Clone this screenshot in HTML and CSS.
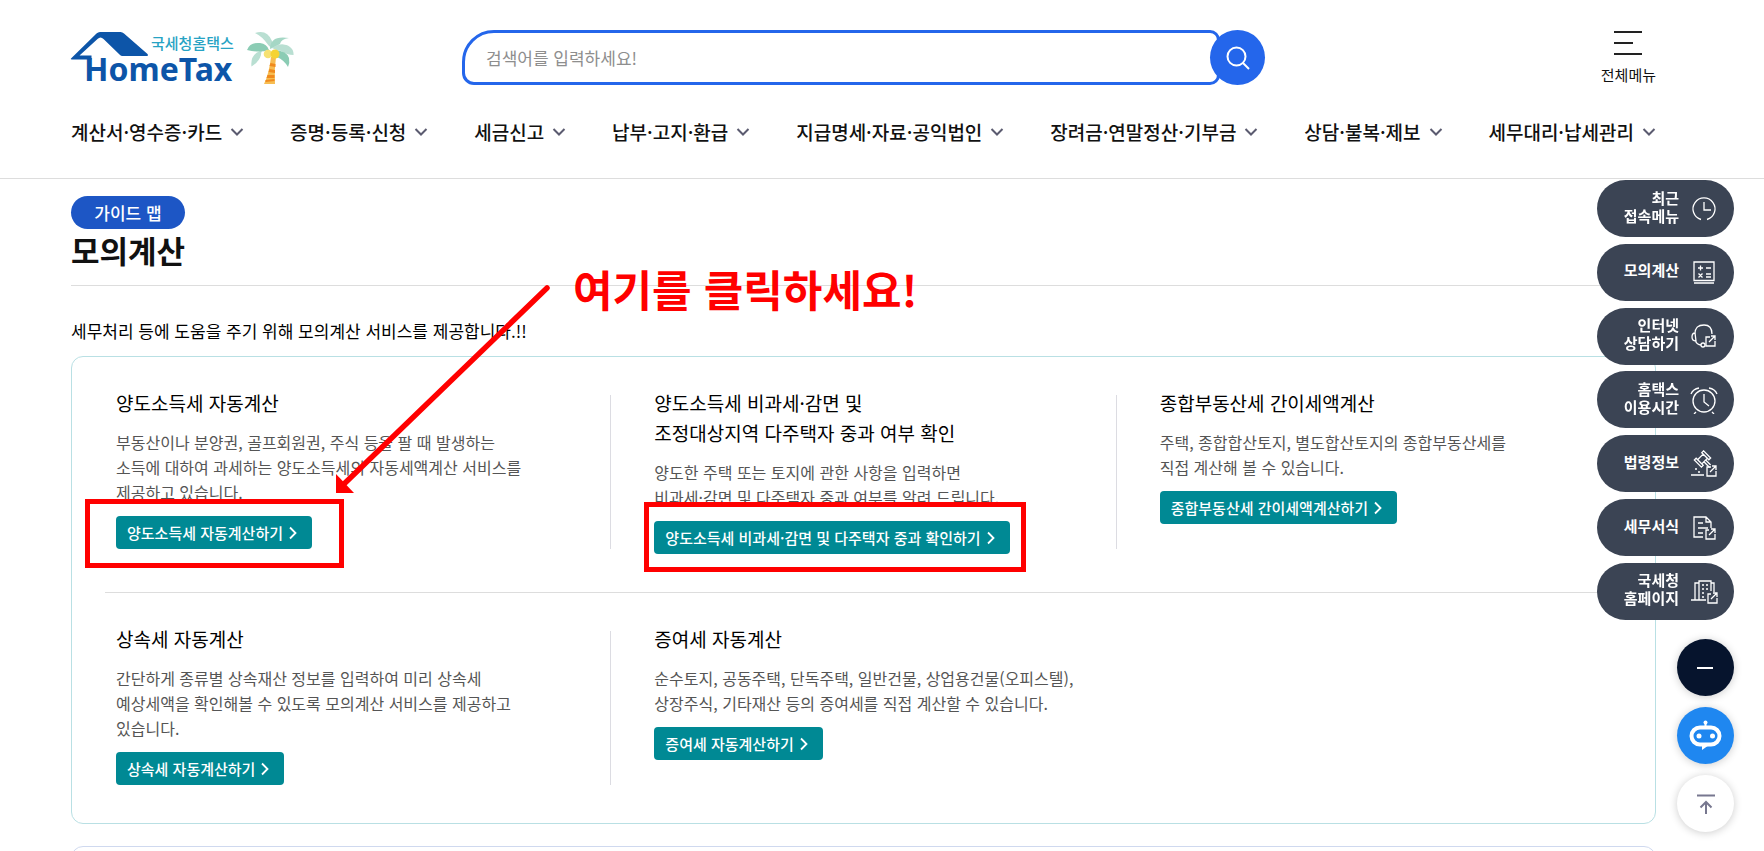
FILE: index.html
```html
<!DOCTYPE html>
<html lang="ko">
<head>
<meta charset="utf-8">
<title>국세청 홈택스 - 모의계산</title>
<meta name="viewport" content="width=device-width, initial-scale=1">
<link rel="stylesheet" href="styles.css">
</head>
<body>
<svg class="defs" aria-hidden="true">
  <symbol id="chev-down" viewBox="0 0 14 10"><path d="M1.500 2l5.500 5.500 5.500-5.500" fill="none" stroke="#5b5b70" stroke-width="2"/></symbol>
  <symbol id="chev-right" viewBox="0 0 8 14"><path d="M1 1.500l5.500 5.500-5.500 5.500" fill="none" stroke="#fff" stroke-width="1.800"/></symbol>
</svg>

<header class="header">
  <div class="top">
    <a class="brand" href="#" aria-label="국세청 홈택스">
      <svg class="logo" viewBox="0 0 168 52">
        <path d="M0 26.500 25.500 1.500Q27 0 29 0H49.500Q51.500 0 53 1.500L76.500 22Q78 24 75 24H51.500Q50 24 48.500 22.500L32.500 7Q29.500 4 26.500 7L8.500 23.500H20.500V27.500H2Q-1 27.500 0 26.500Z" fill="#0d55a8"/>
        <text class="logo-sub" x="80" y="17">국세청홈택스</text>
        <text class="logo-main" x="13" y="49">HomeTax</text>
      </svg>
      <svg class="palm" viewBox="0 0 47 52">
        <path d="M24 25h5q-2 13-1 27H17q5-10 7-27z" fill="#f7bd52"/>
        <path d="M23.500 31l5 1v3l-6-1zM22.500 37l5.500 1v3l-6.500-1zM20.500 43h7v3h-8zM18.500 48l9-1v2l-9 1z" fill="#f08a1d"/>
        <path d="M22 19Q14 15 14 23 12 30 4.500 34.500 3 23 13 19 18 16 22 19z" fill="#b9dfd2"/>
        <path d="M22 18Q13 21 0 18 3 10 13 11 20 12 22 18z" fill="#8bccb4"/>
        <path d="M22 14Q15 4 8 1 20-3 25 9L25 16z" fill="#b9dfd2"/>
        <path d="M23 17Q23 3 42 6 34 7 33 12 28 15 23 17z" fill="#a5d7c5"/>
        <path d="M25 16Q35 9 43 15 47 18 46.500 23 40 23 34 19 28 18 25 16z" fill="#b9dfd2"/>
        <path d="M28 18Q40 19 42 26 43 31 41 35 37 28 30 25z" fill="#8bccb4"/>
        <circle cx="21" cy="22" r="4.300" fill="#f6e173"/><circle cx="28" cy="22" r="4.500" fill="#f5d333"/>
      </svg>
    </a>
    <form class="search">
      <input class="search-input" type="text" aria-label="검색어" placeholder="검색어를 입력하세요!">
      <button class="search-btn" type="button" aria-label="검색">
        <svg viewBox="0 0 24 24" width="24" height="24" fill="none" stroke="#fff" stroke-width="2"><circle cx="10.500" cy="10.500" r="9"/><path d="M17 17l6 6"/></svg>
      </button>
    </form>
    <button class="all-menu" type="button">
      <svg viewBox="0 0 28 26" width="28" height="26" stroke="#222" stroke-width="2"><path d="M0 2h28M0 13h19M0 24h28"/></svg>
      <span>전체메뉴</span>
    </button>
  </div>
  <nav class="nav">
    <a href="#">계산서·영수증·카드<svg class="chev"><use href="#chev-down"/></svg></a>
    <a href="#">증명·등록·신청<svg class="chev"><use href="#chev-down"/></svg></a>
    <a href="#">세금신고<svg class="chev"><use href="#chev-down"/></svg></a>
    <a href="#">납부·고지·환급<svg class="chev"><use href="#chev-down"/></svg></a>
    <a href="#">지급명세·자료·공익법인<svg class="chev"><use href="#chev-down"/></svg></a>
    <a href="#">장려금·연말정산·기부금<svg class="chev"><use href="#chev-down"/></svg></a>
    <a href="#">상담·불복·제보<svg class="chev"><use href="#chev-down"/></svg></a>
    <a href="#">세무대리·납세관리<svg class="chev"><use href="#chev-down"/></svg></a>
  </nav>
</header>

<main class="main">
  <div class="title-block">
    <a class="badge" href="#">가이드 맵</a>
    <h1>모의계산</h1>
  </div>
  <p class="intro">세무처리 등에 도움을 주기 위해 모의계산 서비스를 제공합니다.!!</p>
  <section class="box">
    <div class="row">
      <article class="item">
        <h2>양도소득세 자동계산</h2>
        <p>부동산이나 분양권, 골프회원권, 주식 등을 팔 때 발생하는<br>소득에 대하여 과세하는 양도소득세의 자동세액계산 서비스를<br>제공하고 있습니다.</p>
        <a class="go" href="#">양도소득세 자동계산하기<svg class="arrow"><use href="#chev-right"/></svg></a>
      </article>
      <article class="item">
        <h2>양도소득세 비과세·감면 및<br>조정대상지역 다주택자 중과 여부 확인</h2>
        <p>양도한 주택 또는 토지에 관한 사항을 입력하면<br>비과세·감면 및 다주택자 중과 여부를 알려 드립니다.</p>
        <a class="go" href="#">양도소득세 비과세·감면 및 다주택자 중과 확인하기<svg class="arrow"><use href="#chev-right"/></svg></a>
      </article>
      <article class="item">
        <h2>종합부동산세 간이세액계산</h2>
        <p>주택, 종합합산토지, 별도합산토지의 종합부동산세를<br>직접 계산해 볼 수 있습니다.</p>
        <a class="go" href="#">종합부동산세 간이세액계산하기<svg class="arrow"><use href="#chev-right"/></svg></a>
      </article>
    </div>
    <div class="row">
      <article class="item">
        <h2>상속세 자동계산</h2>
        <p>간단하게 종류별 상속재산 정보를 입력하여 미리 상속세<br>예상세액을 확인해볼 수 있도록 모의계산 서비스를 제공하고<br>있습니다.</p>
        <a class="go" href="#">상속세 자동계산하기<svg class="arrow"><use href="#chev-right"/></svg></a>
      </article>
      <article class="item">
        <h2>증여세 자동계산</h2>
        <p>순수토지, 공동주택, 단독주택, 일반건물, 상업용건물(오피스텔),<br>상장주식, 기타재산 등의 증여세를 직접 계산할 수 있습니다.</p>
        <a class="go" href="#">증여세 자동계산하기<svg class="arrow"><use href="#chev-right"/></svg></a>
      </article>
    </div>
  </section>
  <section class="box box-next"></section>
</main>

<div class="notes">
  <p class="note-text">여기를 클릭하세요!</p>
  <svg class="note-arrow" viewBox="0 0 220 210"><path d="M214 4 12 199" stroke="#f00" stroke-width="5.500" stroke-linecap="round"/><path d="M3 190V209H21Z" fill="#f00"/></svg>
  <div class="mark mark-a"></div>
  <div class="mark mark-b"></div>
</div>

<aside class="quick">
  <div class="pills">
    <a class="pill" href="#"><span>최근<br>접속메뉴</span><svg viewBox="0 0 28 28"><path d="M11 24.500A11 11 0 1 1 17 24.500M14 7v8h7"/></svg></a>
    <a class="pill" href="#"><span>모의계산</span><svg viewBox="0 0 28 28"><path d="M4 4h20v18.500H4zM4 25h20M8 10h5M10.500 7.500v5M16 10h5M8.500 15.500l4 4M12.500 15.500l-4 4M16 16h5M16 19h5"/></svg></a>
    <a class="pill" href="#"><span>인터넷<br>상담하기</span><svg viewBox="0 0 28 28"><path d="M5 12C5 5 9 3 14 3s8 3 8 9M5 11q-3 0-3 4t4 4zM5 18q2 5 6 5"/><circle cx="13" cy="23" r="2"/><path d="M20 15h-4v9h9v-5M19 20l6-6M21 14h4v4"/></svg></a>
    <a class="pill" href="#"><span>홈택스<br>이용시간</span><svg viewBox="0 0 28 28"><circle cx="14" cy="15" r="11"/><path d="M14 8v8l5 4M1 8Q3 3 9 2M27 8Q25 3 19 2M6 26l-2 2M22 26l2 2"/></svg></a>
    <a class="pill" href="#"><span>법령정보</span><svg viewBox="0 0 28 28"><g transform="rotate(-45 12.500 9)"><path d="M8.500 6h8v6h-8zM6 4h2.500v10H6zM16.500 4H19v10h-2.500zM11.500 12v8M14 12v7"/></g><path d="M1 25h13M5 19h2M8 22h2"/><path d="M21 17h-4v9h9v-5M20 22l6-6M22 16h4v4"/></svg></a>
    <a class="pill" href="#"><span>세무서식</span><svg viewBox="0 0 28 28"><path d="M13 23H4V3h12l5 5v6M16 3v5h5M8 9h5M8 14h10M8 19h5"/><path d="M19 16h-3v9h9v-5M19 21l6-6M21 15h4v4"/></svg></a>
    <a class="pill" href="#"><span>국세청<br>홈페이지</span><svg viewBox="0 0 28 28"><path d="M1 23h15M5 23V6h4M9 23V4h12v10M21 6h3v9M12 8h2M16 8h2M12 12h2M16 12h2M12 16h2M12 20h2"/><path d="M21 17h-3v9h9v-5M21 22l6-6M23 16h4v4"/></svg></a>
  </div>
  <div class="rounds">
    <button class="round dark" type="button" aria-label="접기"><svg viewBox="0 0 57 57"><path d="M20 29h16" stroke="#fff" stroke-width="2"/></svg></button>
    <button class="round blue" type="button" aria-label="챗봇"><svg viewBox="0 0 57 57"><path d="M28.500 15v5" stroke="#fff" stroke-width="2"/><circle cx="28.500" cy="15.500" r="2" fill="#fff"/><rect x="14.500" y="20.500" width="28" height="17" rx="8.500" fill="none" stroke="#fff" stroke-width="4"/><circle cx="22" cy="29" r="2.500" fill="#fff"/><circle cx="35.500" cy="29" r="2.500" fill="#fff"/><path d="M25 38h7l-7 5z" fill="#fff"/></svg></button>
    <button class="round white" type="button" aria-label="맨 위로"><svg viewBox="0 0 57 57" fill="none" stroke="#77778f" stroke-width="2"><path d="M20 20.500h18M29 39V27M23.500 32.500l5.500-5.500 5.500 5.500"/></svg></button>
  </div>
</aside>
</body>
</html>
```
FILE: styles.css
```css
* { box-sizing: border-box; }
body {
  margin: 0;
  position: relative;
  background: #fff;
  color: #111;
  font-family: "Noto Sans CJK KR", sans-serif;
  font-size: 16px;
}
a { color: inherit; text-decoration: none; }
button { border: 0; padding: 0; background: none; font: inherit; color: inherit; }
h1, h2, p { margin: 0; }
.defs { display: none; }

.header { padding: 30px 108px 0 71px; border-bottom: 1px solid #ddd; }
.top { display: grid; grid-template-columns: 1fr minmax(300px, 803px) 1fr; align-items: start; }
.brand { display: flex; gap: 8px; padding-top: 2px; }
.logo { width: 168px; height: 52px; overflow: visible; }
.logo-sub { font-size: 15px; font-weight: 500; fill: #27a3c4; }
.logo-main { font-family: "Noto Sans", sans-serif; font-size: 32px; font-weight: 700; fill: #0d55a8; }
.palm { width: 47px; height: 52px; }
.search { display: flex; align-items: center; }
.search-input {
  flex: 1;
  min-width: 0;
  height: 55px;
  margin-right: -10px;
  padding: 0 21px;
  border: 3px solid #2466eb;
  border-radius: 32px 10px 10px 12px;
  font: inherit;
  font-size: 17px;
  outline: 0;
}
.search-input::placeholder { color: #8e8e8e; }
.search-btn {
  display: grid;
  place-items: center;
  width: 55px;
  height: 55px;
  border-radius: 50%;
  background: #2466eb;
}
.all-menu {
  justify-self: end;
  display: flex;
  flex-direction: column;
  align-items: center;
  gap: 9px;
  font-size: 15px;
  line-height: 20px;
}
.nav { display: flex; justify-content: space-between; padding: 32px 0 31px; }
.nav a { display: flex; align-items: center; gap: 8px; font-size: 19px; font-weight: 500; line-height: 30px; white-space: nowrap; }
.chev { width: 14px; height: 10px; }

.main { padding: 17px 108px 0 71px; }
.title-block { padding-bottom: 14px; border-bottom: 1px solid #ddd; }
.badge {
  display: block;
  width: 114px;
  border-radius: 17px;
  background: #1d56c5;
  color: #fff;
  font-size: 17px;
  font-weight: 500;
  line-height: 33px;
  text-align: center;
}
h1 { font-size: 31px; line-height: 42px; }
.intro { padding: 33px 0 13px; font-size: 17px; line-height: 24px; color: #000; }
.box { padding: 0 33px; border: 1px solid #b9e0e4; border-radius: 12px; }
.box-next { height: 24px; margin-top: 22px; border-color: #cfd9ef; }
.row {
  display: grid;
  grid-template-columns: 538fr 505fr 462fr;
  padding: 31px 0 38px 11px;
}
.row + .row { border-top: 1px solid #ddd; }
.item { position: relative; }
.item + .item::before {
  content: "";
  position: absolute;
  top: 7px;
  left: -44px;
  width: 1px;
  height: 154px;
  background: #dcdce2;
}
h2 { padding-bottom: 1px; font-size: 19px; font-weight: 400; line-height: 30px; color: #000; white-space: nowrap; }
.item p { margin: 11px 0; color: #555; font-size: 16px; line-height: 25px; white-space: nowrap; }
.go {
  display: inline-flex;
  align-items: center;
  gap: 6px;
  height: 33px;
  padding: 0 15px 0 11px;
  border-radius: 4px;
  background: #008994;
  color: #fff;
  font-size: 15px;
  font-weight: 500;
  white-space: nowrap;
  vertical-align: top;
}
.arrow { width: 8px; height: 14px; }

.notes { position: absolute; top: 0; left: 0; }
.note-text { position: absolute; top: 255px; left: 573px; color: #f00; font-size: 43px; font-weight: 700; line-height: 66px; white-space: nowrap; }
.note-arrow { position: absolute; top: 284px; left: 333px; width: 220px; height: 210px; }
.mark { position: absolute; border: 5px solid #f00; }
.mark-a { top: 499px; left: 85px; width: 259px; height: 69px; }
.mark-b { top: 502px; left: 644px; width: 382px; height: 70px; }

.quick { position: fixed; top: 180px; right: 30px; width: 137px; }
.pills { display: flex; flex-direction: column; justify-content: space-between; height: 440px; }
.pill {
  display: flex;
  align-items: center;
  justify-content: flex-end;
  gap: 11px;
  height: 57px;
  padding-right: 16px;
  border-radius: 29px;
  background: #3b4454;
  color: #fff;
  font-size: 15px;
  font-weight: 700;
  line-height: 18px;
  text-align: right;
}
.pill span { padding-bottom: 4px; }
.pill svg { flex: none; width: 28px; height: 28px; fill: none; stroke: #fff; stroke-width: 1.3; }
.rounds { display: flex; flex-direction: column; align-items: flex-end; gap: 11px; padding-top: 19px; }
.round { width: 57px; height: 57px; border-radius: 50%; box-shadow: 0 1px 8px rgba(0, 0, 0, .2); }
.round svg { display: block; width: 57px; height: 57px; }
.dark { background: #06142d; }
.blue { background: #1f87f0; }
.white { background: #fff; }
```
